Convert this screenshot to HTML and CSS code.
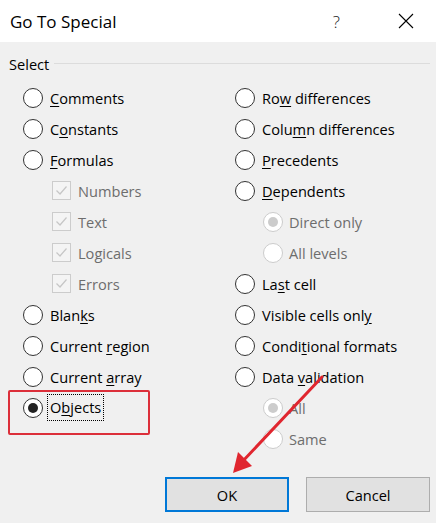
FILE: index.html
```html
<!DOCTYPE html>
<html lang="en">
<head>
<meta charset="UTF-8">
<title>Go To Special</title>
<link rel="stylesheet" href="styles.css">
</head>
<body>

<div class="dialog">
    <div class="titlebar">
        <span class="title">Go To Special</span>
        <span class="help">?</span>
        <svg class="close" width="16" height="16" viewBox="0 0 16 16">
            <path d="M1 1 L15 15 M15 1 L1 15" stroke="#000" stroke-width="1.1" fill="none"/>
        </svg>
    </div>

    <div class="body">
        <div class="group-label">
            <span>Select</span>
            <div class="rule"></div>
        </div>

        <div class="options">
            <!-- Left column -->
            <div class="col">
                <div class="opt"><span class="radio"></span><span class="label"><u>C</u>omments</span></div>
                <div class="opt"><span class="radio"></span><span class="label">C<u>o</u>nstants</span></div>
                <div class="opt"><span class="radio"></span><span class="label"><u>F</u>ormulas</span></div>
                <div class="opt sub-check"><span class="check"><svg width="17" height="17" viewBox="0 0 17 17"><path d="M3.5 8.5 L7 12 L13.5 4.5" stroke="#c6c6c6" stroke-width="1.2" fill="none"/></svg></span><span class="label dim">Numbers</span></div>
                <div class="opt sub-check"><span class="check"><svg width="17" height="17" viewBox="0 0 17 17"><path d="M3.5 8.5 L7 12 L13.5 4.5" stroke="#c6c6c6" stroke-width="1.2" fill="none"/></svg></span><span class="label dim">Text</span></div>
                <div class="opt sub-check"><span class="check"><svg width="17" height="17" viewBox="0 0 17 17"><path d="M3.5 8.5 L7 12 L13.5 4.5" stroke="#c6c6c6" stroke-width="1.2" fill="none"/></svg></span><span class="label dim">Logicals</span></div>
                <div class="opt sub-check"><span class="check"><svg width="17" height="17" viewBox="0 0 17 17"><path d="M3.5 8.5 L7 12 L13.5 4.5" stroke="#c6c6c6" stroke-width="1.2" fill="none"/></svg></span><span class="label dim">Errors</span></div>
                <div class="opt"><span class="radio"></span><span class="label">Blan<u>k</u>s</span></div>
                <div class="opt"><span class="radio"></span><span class="label">Current <u>r</u>egion</span></div>
                <div class="opt"><span class="radio"></span><span class="label">Current <u>a</u>rray</span></div>
                <div class="opt marked"><span class="radio on"></span><span class="label focus">O<u>b</u>jects</span></div>
            </div>

            <!-- Right column -->
            <div class="col">
                <div class="opt"><span class="radio"></span><span class="label">Ro<u>w</u> differences</span></div>
                <div class="opt"><span class="radio"></span><span class="label">Colu<u>m</u>n differences</span></div>
                <div class="opt"><span class="radio"></span><span class="label"><u>P</u>recedents</span></div>
                <div class="opt"><span class="radio"></span><span class="label"><u>D</u>ependents</span></div>
                <div class="opt sub-radio"><span class="radio off on"></span><span class="label dim">Direct only</span></div>
                <div class="opt sub-radio"><span class="radio off"></span><span class="label dim">All levels</span></div>
                <div class="opt"><span class="radio"></span><span class="label">La<u>s</u>t cell</span></div>
                <div class="opt"><span class="radio"></span><span class="label">Visible cells onl<u>y</u></span></div>
                <div class="opt"><span class="radio"></span><span class="label">Condi<u>t</u>ional formats</span></div>
                <div class="opt"><span class="radio"></span><span class="label">Data <u>v</u>alidation</span></div>
                <div class="opt sub-radio"><span class="radio off on"></span><span class="label dim">All</span></div>
                <div class="opt sub-radio"><span class="radio off"></span><span class="label dim">Same</span></div>
            </div>
        </div>

        <div class="buttons">
            <button class="btn default">OK</button>
            <button class="btn">Cancel</button>
        </div>
    </div>

    <!-- annotation arrow -->
    <svg class="arrow" width="436" height="523" viewBox="0 0 436 523">
        <line x1="322" y1="377" x2="242" y2="462" stroke="#e0262f" stroke-width="3" stroke-linecap="round"/>
        <polygon points="233,473 238,452 252,466" fill="#e0262f"/>
    </svg>
</div>

</body>
</html>
```

FILE: styles.css
```css
* {
    margin: 0; padding: 0;
    box-sizing: border-box;
}

body {
    font-family: 'Open Sans', 'Noto Sans', sans-serif;
    background: #f0f0f0;
    color: #000;
}

.dialog {
    position: relative;
    width: 436px;
    height: 523px;
    background: #f0f0f0;
    overflow: hidden;
}

.titlebar {
    height: 42px;
    background: #fff;
    display: flex;
    align-items: center;
    padding: 0 0 0 10px;
}

.title {
    font-size: 17px;
    flex: 1;
}

.help {
    font-size: 17px;
    font-weight: 300;
    color: #222;
    margin-right: 58px;
}

.close {
    margin-right: 22px;
}

.body {
    padding: 12px 6px 0 0;
}

.group-label {
    display: flex;
    align-items: center;
    height: 20px;
    padding-left: 9px;
    font-size: 14.6px;
}

.group-label .rule {
    flex: 1;
    height: 1px;
    background: #dcdcdc;
    margin-left: 5px;
    margin-top: -1px;
}

.options {
    display: grid;
    grid-template-columns: 212px 1fr;
    padding-left: 23px;
    margin-top: 8px;
}

.opt {
    display: flex;
    align-items: center;
    height: 31px;
    font-size: 14.6px;
}

.radio {
    width: 20px;
    height: 20px;
    border: 1.3px solid #333;
    border-radius: 50%;
    background: #fff;
    display: flex;
    align-items: center;
    justify-content: center;
    flex-shrink: 0;
}

.radio.on::after {
    content: "";
    width: 10px;
    height: 10px;
    border-radius: 50%;
    background: #222;
}

.radio.off {
    border-color: #cccccc;
}

.radio.off.on::after {
    background: #cccccc;
}

.label {
    margin-left: 7px;
}

.label u {
    text-underline-offset: 2px;
}

.dim {
    color: #6d6d6d;
}

.sub-check {
    padding-left: 29px;
}

.check {
    width: 19px;
    height: 19px;
    border: 1px solid #cccccc;
    background: #f4f4f4;
    display: flex;
    align-items: center;
    justify-content: center;
}

.sub-check .label {
    margin-left: 7px;
}

.sub-radio {
    padding-left: 28px;
}

.sub-radio .label {
    margin-left: 6px;
}

/* annotation box around the chosen option */
.marked {
    position: relative;
}

.marked::before {
    content: "";
    position: absolute;
    left: -15px;
    top: -2px;
    width: 138px;
    height: 41px;
    border: 2.5px solid #dc2f3a;
    border-radius: 2px;
}

.focus {
    margin-left: 5px;
    padding: 2px 2px;
    outline: 1px dotted #000;
    line-height: 21px;
}

.buttons {
    display: flex;
    justify-content: flex-end;
    gap: 17px;
    margin-top: 23px;
}

.btn {
    width: 124px;
    height: 35px;
    font-family: inherit;
    font-size: 14.6px;
    background: #e1e1e1;
    border: 1px solid #adadad;
    color: #000;
}

.btn.default {
    border: 2px solid #0078d7;
}

.arrow {
    position: absolute;
    left: 0;
    top: 0;
    pointer-events: none;
}
```
